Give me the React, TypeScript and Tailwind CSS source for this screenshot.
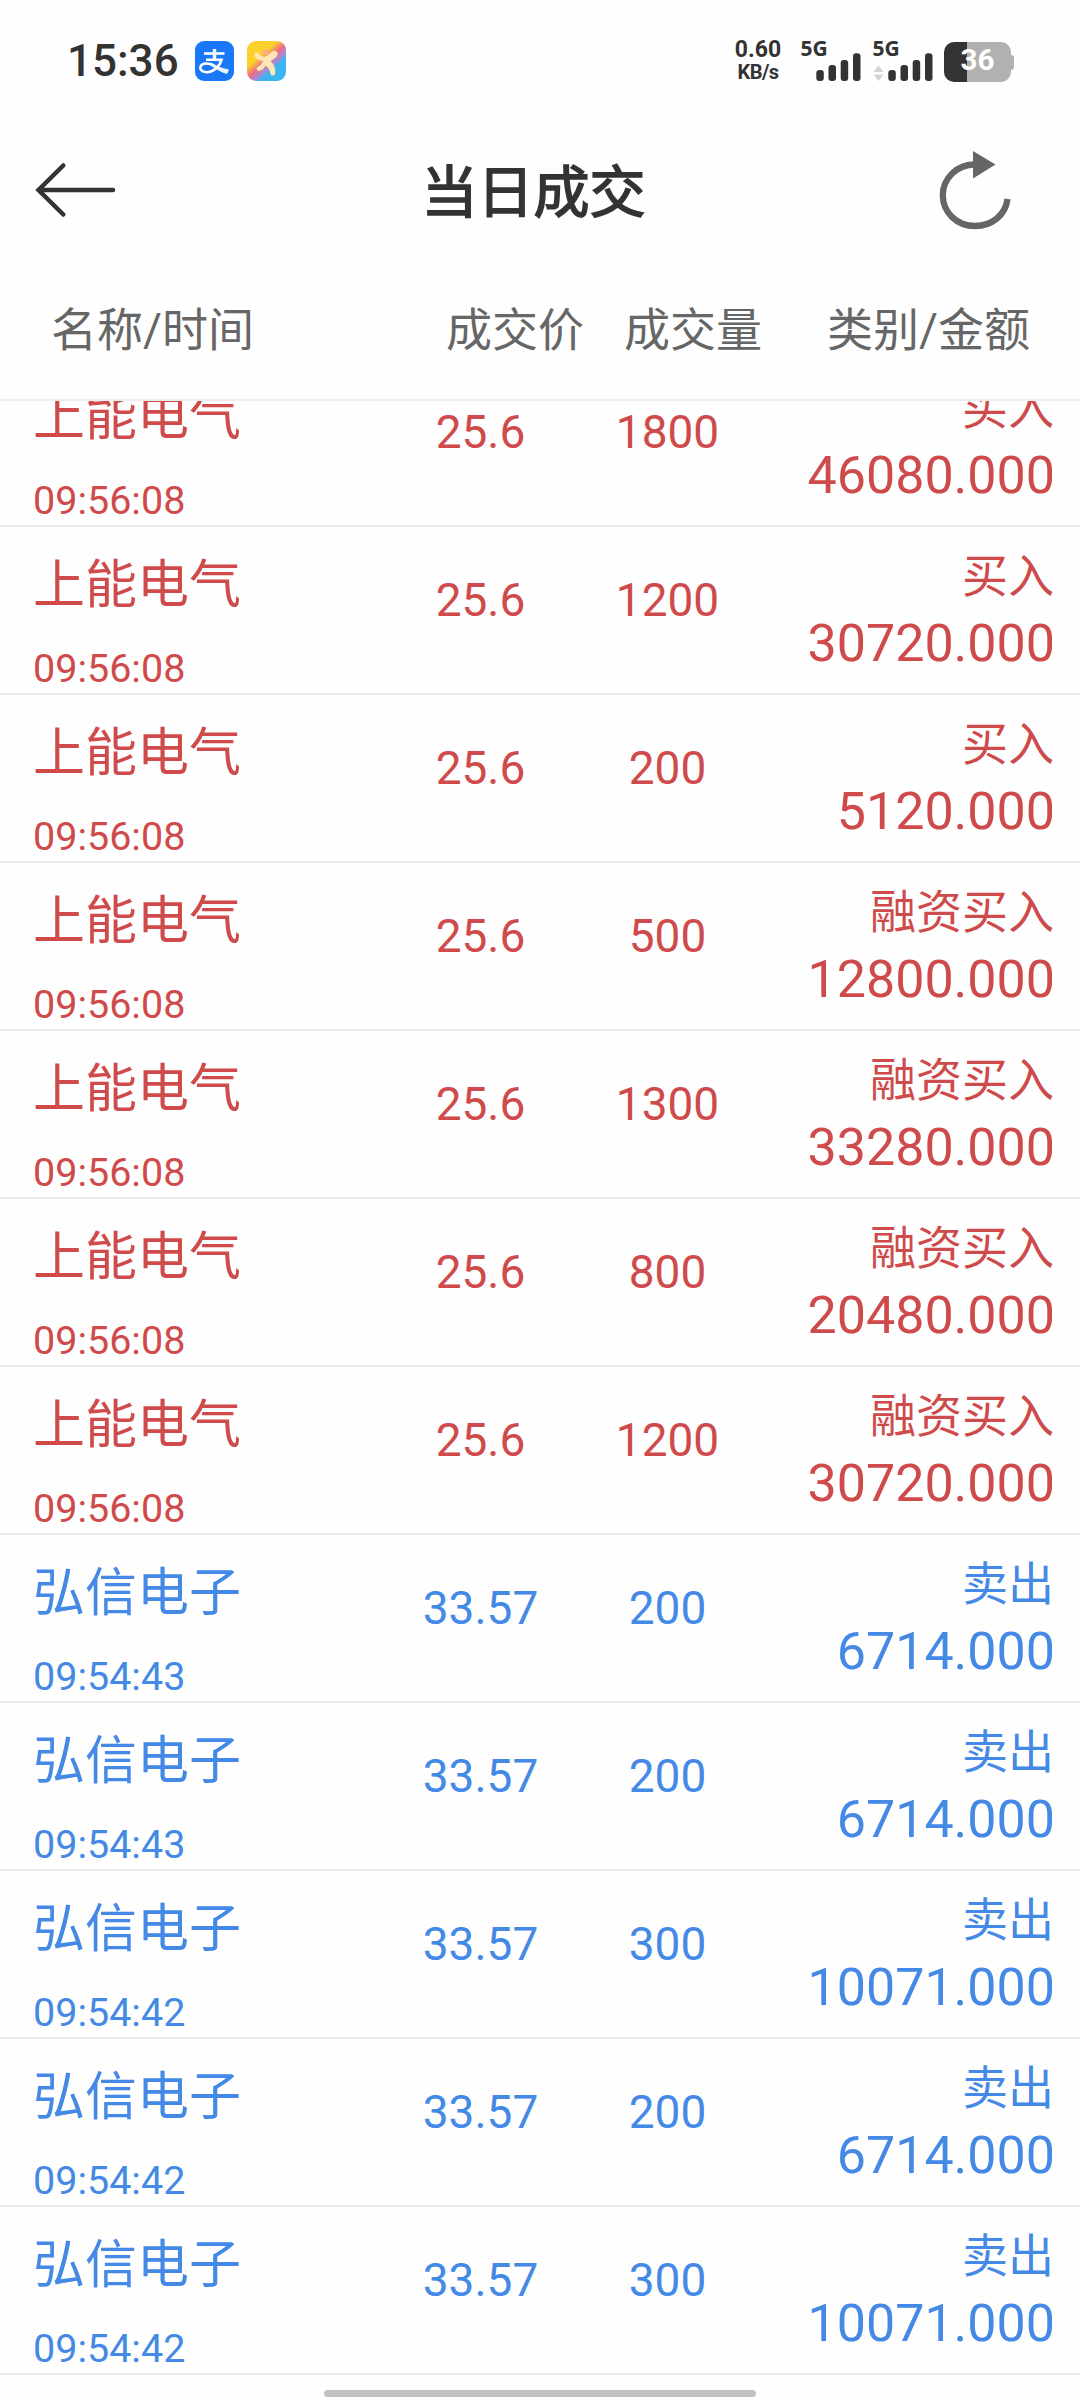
const FONT = "font-[Roboto,'Noto_Sans_CJK_SC',sans-serif]";

type Trade = { name: string; time: string; price: string; volume: string; kind: string; amount: string; side: "buy" | "sell" };

const buy = (volume: string, kind: string, amount: string): Trade => ({
  name: "上能电气", time: "09:56:08", price: "25.6", volume, kind, amount, side: "buy",
});
const sell = (time: string, volume: string, amount: string): Trade => ({
  name: "弘信电子", time, price: "33.57", volume, kind: "卖出", amount, side: "sell",
});

const trades: Trade[] = [
  buy("1800", "买入", "46080.000"),
  buy("1200", "买入", "30720.000"),
  buy("200", "买入", "5120.000"),
  buy("500", "融资买入", "12800.000"),
  buy("1300", "融资买入", "33280.000"),
  buy("800", "融资买入", "20480.000"),
  buy("1200", "融资买入", "30720.000"),
  sell("09:54:43", "200", "6714.000"),
  sell("09:54:43", "200", "6714.000"),
  sell("09:54:42", "300", "10071.000"),
  sell("09:54:42", "200", "6714.000"),
  sell("09:54:42", "300", "10071.000"),
];

function AlipayIcon() {
  return (
    <svg width="39" height="40" viewBox="0 0 39 40" fill="none">
      <rect width="39" height="40" rx="9" fill="#1a78f8" />
      <g stroke="#fff" strokeLinecap="butt">
        <path d="M9 12.500H29.500" strokeWidth="2.600" />
        <path d="M19.500 8V19" strokeWidth="3.400" />
        <path d="M11 18.700H26.500C25 25 18 31.500 11.500 31.200C7 31 4.500 28.500 5.500 25.500C7.500 21.500 14 22 19 24.500" strokeWidth="2.600" />
      </g>
      <path d="M17 22.400C23 25 28 27.500 34 28.500L32 33C26 31.500 21 28 16.500 25Z" fill="#fff" fillOpacity="0.92" />
    </svg>
  );
}

function FigureIcon() {
  return (
    <svg width="39" height="40" viewBox="0 0 39 40" fill="none">
      <defs>
        <linearGradient id="fig" x1="6" y1="4" x2="34" y2="36" gradientUnits="userSpaceOnUse">
          <stop offset="0.3" stopColor="#fbd22c" />
          <stop offset="0.5" stopColor="#f0688a" />
          <stop offset="0.62" stopColor="#b486c8" />
          <stop offset="0.75" stopColor="#3cb4f4" />
        </linearGradient>
      </defs>
      <rect width="39" height="40" rx="9" fill="url(#fig)" />
      <circle cx="18" cy="11.300" r="3" fill="#fbb27a" />
      <path
        d="M7.500 12.700C8.500 11 11 11.200 12 13C13.500 15.800 17 16.500 19.500 15C22 13.500 23.500 10.500 27 10C30.500 9.500 31.500 12.500 30 15C28.500 17.500 25 18.500 23.500 20.500C27.500 23 29 29 28 33C27.500 35 24 35.200 23.500 33C23 29.500 21.500 26.500 18.500 24.800C17 27.500 15 29.500 12 29.800C9.500 30 8.800 27.200 10.800 26C13.500 24.500 15.500 22.500 16 19.800C12 19.500 8.500 17.500 7.500 15Z"
        fill="#fde6b4"
      />
    </svg>
  );
}

function Signal({ data = false }: { data?: boolean }) {
  return (
    <svg className="overflow-visible" width="62" height="40" viewBox="0 0 62 40" fill="#333">
      <text x="-0.500" y="15.400" fontFamily="Noto Sans" fontWeight="700" fontSize="21">5G</text>
      {data && <path d="M0.500 31L5.500 24.600L10.600 31ZM0.500 33.400H10.600L5.500 40Z" fill="#d3d3d3" />}
      <rect x="15.300" y="29" width="7.500" height="11" rx="3" />
      <rect x="27.500" y="24" width="7.500" height="16" rx="3" />
      <rect x="39.700" y="19" width="7.500" height="21" rx="3" />
      <rect x="52" y="12.300" width="7.500" height="27.700" rx="3" />
    </svg>
  );
}

function StatusBar() {
  return (
    <div className="flex h-[122px] items-start pl-[67px] pr-[66px] pt-[41px] text-[#333]">
      <span className="w-[128px] text-[44px] font-medium leading-[40px]">15:36</span>
      <div className="flex gap-[13px]">
        <AlipayIcon />
        <FigureIcon />
      </div>
      <div className="ml-auto flex">
        <div className="-mt-[1px] w-[50px] text-center font-bold">
          <div className="text-[23px] leading-[20px]">0.60</div>
          <div className="mt-[1px] text-[20px] leading-[22px] tracking-[-0.6px]">KB/s</div>
        </div>
        <div className="ml-[18px] flex gap-[10px]">
          <Signal />
          <Signal data />
        </div>
        <div className="ml-[9px] flex items-center">
          <div className="flex h-[40px] w-[67px] justify-center rounded-[10px] bg-[linear-gradient(90deg,#333_23.500px,#b1b1b1_23.500px)] text-[29.500px] font-bold leading-[37px] text-white">
            36
          </div>
          <div className="h-[15px] w-[3px] rounded-r-sm bg-[#b1b1b1]" />
        </div>
      </div>
    </div>
  );
}

function TitleBar() {
  return (
    <div className="flex h-[156px] items-start justify-between pl-[34px] pr-[66px] text-[#333]">
      <svg className="mt-[38px]" width="84" height="60" viewBox="0 0 84 60" fill="none" stroke="#333" strokeWidth="4.500" strokeLinecap="round">
        <path d="M79 30H4.500M29.300 5.500L4.500 30L29.300 54.500" />
      </svg>
      <h1 className="mt-[37px] pl-[11px] text-[56px] font-normal leading-[68px] [-webkit-text-stroke:1.600px_#333]">当日成交</h1>
      <svg className="mt-[24px]" width="76" height="90" viewBox="0 0 76 90" fill="none">
        <path d="M37 18.500C19 18.500 4.800 32 4.800 49.300C4.800 66.500 19 80 37 80C54 80 67.500 69 69.500 53" stroke="#666" strokeWidth="6.300" />
        <path d="M35 5L57.500 18.500L35 32.500Z" fill="#666" />
      </svg>
    </div>
  );
}

function TableHead() {
  return (
    <div className="flex h-[123px] border-b-2 border-[#ededed] pt-[25px] text-[46px] leading-[54px] text-[#666]">
      <div className="w-[426px] pl-[51px]">名称/时间</div>
      <div className="w-[178px] text-center">成交价</div>
      <div className="w-[178px] text-center">成交量</div>
      <div className="flex-1 pr-[50px] text-right">类别/金额</div>
    </div>
  );
}

function Row({ t }: { t: Trade }) {
  const color = t.side === "buy" ? "text-[#cf4a4a]" : "text-[#4489e6]";
  return (
    <div className={`flex h-[168px] shrink-0 border-b-2 border-[#ededed] ${color}`}>
      <div className="w-[387px] pl-[33px] pt-[29px]">
        <div className="text-[52px] leading-[60px]">{t.name}</div>
        <div className="mt-[29px] text-[39.500px] leading-[48px]">{t.time}</div>
      </div>
      <div className="w-[187px] pt-[46px] text-center text-[46px] leading-[54px]">{t.price}</div>
      <div className="w-[187px] pt-[46px] text-center text-[46px] leading-[54px]">{t.volume}</div>
      <div className="flex-1 pr-[25px] pt-[22px] text-right">
        <div className="pr-[1px] text-[46px] leading-[54px]">{t.kind}</div>
        <div className="mt-[11px] text-[52px] leading-[60px]">{t.amount}</div>
      </div>
    </div>
  );
}

export default function App() {
  return (
    <div className={`relative flex h-[2400px] w-[1080px] flex-col overflow-hidden bg-[#fefefe] ${FONT}`}>
      <StatusBar />
      <TitleBar />
      <TableHead />
      <div className="flex flex-1 flex-col overflow-hidden">
        <div className="-mt-[42px] flex flex-col">
          {trades.map((t, i) => (
            <Row key={i} t={t} />
          ))}
        </div>
      </div>
      <div className="absolute bottom-[3px] left-[324px] h-[7px] w-[432px] rounded-full bg-[#c2c2c2]" />
    </div>
  );
}
